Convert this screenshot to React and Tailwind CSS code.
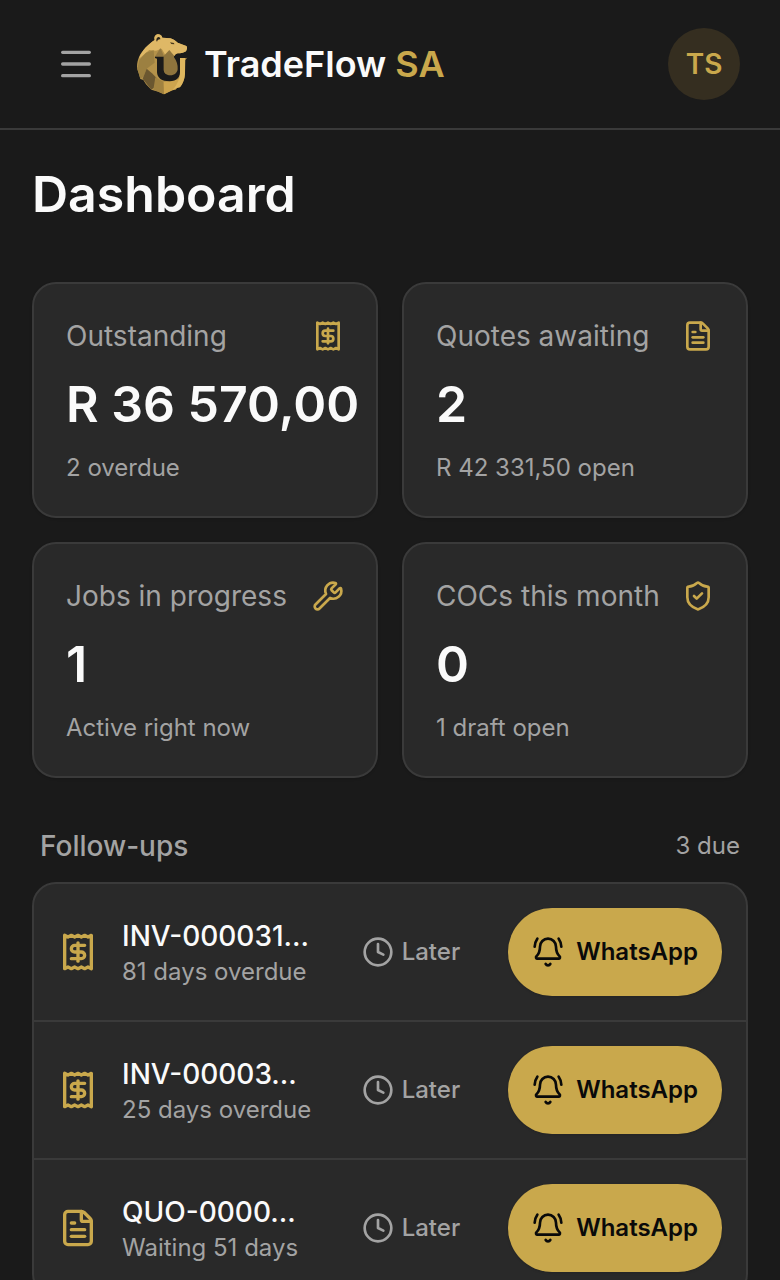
import React from 'react';
import { BellRing, Clock, FileText, Menu, ShieldCheck, Wrench } from 'lucide-react';

const ReceiptIcon = ({ className }) => (
  <svg
    viewBox="0 0 24 24"
    fill="none"
    stroke="currentColor"
    strokeWidth="2"
    strokeLinecap="round"
    strokeLinejoin="round"
    className={className}
    aria-hidden="true"
  >
    <path d="M4 2v20l2-1 2 1 2-1 2 1 2-1 2 1 2-1 2 1V2l-2 1-2-1-2 1-2-1-2 1-2-1-2 1Z" />
    <path d="M16 8h-6a2 2 0 1 0 0 4h4a2 2 0 1 1 0 4H8" />
    <path d="M12 17.5v-11" />
  </svg>
);

const stats = [
  { label: 'Outstanding', value: 'R 36 570,00', note: '2 overdue', Icon: ReceiptIcon },
  { label: 'Quotes awaiting', value: '2', note: 'R 42 331,50 open', Icon: FileText },
  { label: 'Jobs in progress', value: '1', note: 'Active right now', Icon: Wrench },
  { label: 'COCs this month', value: '0', note: '1 draft open', Icon: ShieldCheck },
];

const followUps = [
  { id: 'INV-000031…', note: '81 days overdue', Icon: ReceiptIcon },
  { id: 'INV-00003…', note: '25 days overdue', Icon: ReceiptIcon },
  { id: 'QUO-0000…', note: 'Waiting 51 days', Icon: FileText },
];

const BearLogo = () => (
  <svg viewBox="48 36 156 192" className="h-16 w-13 shrink-0" aria-hidden="true">
    {/* Body */}
    <path
      d="M104 60 C101 50 107 42 116 43 C123 44 126 49 127 53 L151 55 C160 57 166 62 173 68 L199 78 C203 82 201 88 198 94 C190 99 181 100 173 100 C165 103 163 107 163 112 L202 112 L196 121 L195 160 C195 174 189 190 180 201 L172 203 L167 209 L157 211 L132 223 L115 215 L94 209 L78 193 L70 180 L61 177 L58 164 L52 148 C48 127 58 104 69 92 C80 79 91 69 104 60Z"
      fill="#b4924a"
    />
    {/* Head */}
    <path
      d="M104 60 C101 50 107 42 116 43 C123 44 126 49 127 53 L151 55 C160 57 166 62 173 68 L199 78 C203 82 201 88 198 94 C190 99 181 100 173 100 C165 103 162 107 162 112 L140 112 L125 86 L108 92 L88 90 L57 116 C65 90 86 72 104 60Z"
      fill="#dfb866"
    />
    {/* Fur facets */}
    <path d="M101 91 L78 98 L58 120 L52 147 L61 177 L70 170 L80 146 L104 128Z" fill="#9c8041" />
    <path d="M80 146 L68 176 L94 209 L106 200 L112 176 L96 160Z" fill="#6b5730" />
    <path d="M106 172 L100 209 L115 215 L132 223 L131 186Z" fill="#a18240" />
    <path d="M132 223 L131 186 L158 183 L180 176 L172 203 L157 211Z" fill="#cda44e" />
    <path d="M104 112 L121 84 L133 111Z" fill="#937840" />
    <path d="M131 108 L148 90 L163 108 L176 134 L174 153 L164 168 L140 166 L130 150Z" fill="#8e743d" />
    {/* Ear and eye */}
    <path d="M109 62 C108 50 121 47 121 58 C117 57 113 59 111 65Z" fill="#2a2418" />
    <path d="M150 67 L162 69 L163 73 L154 72Z" fill="#4a3a1d" />
    {/* Horseshoe cutout */}
    <path
      d="M105 110 L131 110 L131 149 C132 160 141 166 151 166 C164 166 172 158 173 148 C174 135 170 123 162 112 L162 108 L203 108 L202 113 L194 115 L182 115 L182 151 C181 173 169 184 149 184 C125 184 112 174 111 157 L111 116 L105 114Z"
      fill="#1a1a1a"
    />
    <path d="M180 114 L195 114 L195 161 C194 179 188 192 180 202 L169 204 L157 211 C166 199 180 183 180 155Z" fill="#deb65e" />
  </svg>
);

const Header = () => (
  <header className="flex h-[130px] items-center border-b-2 border-[#3a3a3a] px-8">
    <button type="button" aria-label="Open menu" className="flex size-22 items-center justify-center text-[#a3a3a3]">
      <Menu className="size-10" />
    </button>
    <a href="#home" className="ml-4 flex items-center gap-4 text-[36px] leading-12 font-semibold text-[#fafafa]">
      <BearLogo />
      <span>
        TradeFlow <span className="text-[#c9a84c]">SA</span>
      </span>
    </a>
    <button type="button" aria-label="Account" className="ml-auto p-2">
      <span className="flex size-18 items-center justify-center rounded-full bg-[#352e20] text-[28px] leading-10 font-semibold text-[#c9a84c]">
        TS
      </span>
    </button>
  </header>
);

const StatCard = ({ label, value, note, Icon }) => (
  <div className="min-w-0 rounded-3xl border-2 border-[#3a3a3a] bg-[#292929] p-8 shadow-sm">
    <div className="flex items-center justify-between gap-2 text-[28px] leading-10 text-[#a3a3a3]">
      <span className="whitespace-nowrap">{label}</span>
      <Icon className="size-8 shrink-0 text-[#c9a84c]" />
    </div>
    <p className="mt-4 text-[50px] leading-16 font-semibold whitespace-nowrap text-[#fafafa]">{value}</p>
    <p className="mt-4 text-2xl text-[#a3a3a3]">{note}</p>
  </div>
);

const FollowUpRow = ({ id, note, Icon }) => (
  <li className="flex items-center gap-6 p-6">
    <Icon className="size-10 shrink-0 text-[#c9a84c]" />
    <div className="min-w-0 flex-1">
      <p className="truncate text-[28px] leading-10 font-medium text-[#fafafa]">{id}</p>
      <p className="truncate text-2xl text-[#a3a3a3]">{note}</p>
    </div>
    <button type="button" className="flex h-22 items-center gap-2 rounded-full px-6 text-2xl font-medium text-[#a3a3a3]">
      <Clock className="size-8" />
      Later
    </button>
    <button
      type="button"
      className="flex h-22 items-center gap-3 rounded-full bg-[#c9a84c] px-6 text-2xl font-semibold text-[#0a0a0a] shadow-sm"
    >
      <BellRing className="size-8" />
      WhatsApp
    </button>
  </li>
);

const App = () => {
  return (
    <div className="min-h-screen bg-[#1a1a1a] font-[Inter,sans-serif]">
      <Header />
      <main className="px-8 pt-8 pb-8">
        <h1 className="text-[50px] leading-16 font-semibold text-[#fafafa]">Dashboard</h1>

        <section aria-label="Summary" className="mt-14 grid grid-cols-2 gap-6">
          {stats.map((stat) => (
            <StatCard key={stat.label} {...stat} />
          ))}
        </section>

        <section className="mt-12">
          <div className="flex items-center justify-between px-2 text-[#a3a3a3]">
            <h2 className="text-[28px] leading-10 font-medium">Follow-ups</h2>
            <span className="text-2xl">3 due</span>
          </div>
          <ul className="mt-4 divide-y-2 divide-[#3a3a3a] rounded-3xl border-2 border-[#3a3a3a] bg-[#292929]">
            {followUps.map((item) => (
              <FollowUpRow key={item.id} {...item} />
            ))}
          </ul>
        </section>
      </main>
    </div>
  );
};

export default App;
